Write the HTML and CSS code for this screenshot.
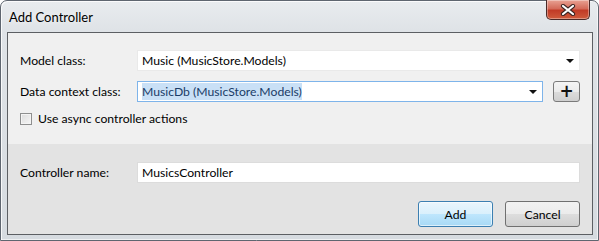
FILE: index.html
```html
<!DOCTYPE html>
<html lang="en">
<head>
  <meta charset="UTF-8">
  <title>Add Controller</title>
  <link rel="stylesheet" href="styles.css">
</head>
<body>
  <div class="window">
    <div class="titlebar">
      <span class="title">Add Controller</span>
      <button class="close-btn" title="Close">
        <svg width="16" height="12" viewBox="0 0 16 12">
          <path d="M3 2 L13 10 M13 2 L3 10" stroke="#3a2422" stroke-width="4.2" stroke-linecap="round"/>
          <path d="M3 2 L13 10 M13 2 L3 10" stroke="#fff" stroke-width="2.2" stroke-linecap="round"/>
        </svg>
      </button>
    </div>

    <div class="client">
      <div class="options">
        <div class="field">
          <label>Model class:</label>
          <div class="combo">
            <span class="combo-text">Music (MusicStore.Models)</span>
            <span class="arrow"></span>
          </div>
        </div>

        <div class="field">
          <label>Data context class:</label>
          <div class="combo-row">
            <div class="combo focused">
              <span class="combo-text"><span class="selected">MusicDb (MusicStore.Models)</span></span>
              <span class="arrow"></span>
            </div>
            <button class="plus-btn">+</button>
          </div>
        </div>

        <label class="check">
          <span class="box"></span>
          Use async controller actions
        </label>
      </div>

      <div class="footer">
        <div class="field">
          <label>Controller name:</label>
          <div class="textbox">MusicsController</div>
        </div>
        <div class="buttons">
          <button class="btn default">Add</button>
          <button class="btn">Cancel</button>
        </div>
      </div>
    </div>
  </div>
</body>
</html>
```

FILE: styles.css
```css
* {
  box-sizing: border-box;
}

body {
  margin: 0;
  width: 599px;
  height: 241px;
  background: #ffffff;
  font-family: Lato, "Noto Sans", sans-serif;
  font-size: 12.2px;
  color: #000;
  overflow: hidden;
}

.window {
  width: 599px;
  height: 241px;
  border: 1px solid #5f6670;
  border-radius: 7px 7px 0 0;
  padding: 0 5px 5px 6px;
  background: linear-gradient(to bottom, #e9ecef 0%, #dfe3e7 12%, #d6dbe0 100%);
  box-shadow: inset 1px 1px 0 rgba(255, 255, 255, 0.8), inset -1px -1px 0 rgba(255, 255, 255, 0.6);
}

.titlebar {
  height: 31px;
  display: flex;
  align-items: flex-start;
  justify-content: space-between;
}

.title {
  margin-top: 8px;
  margin-left: 2px;
  font-size: 13px;
  color: #000;
  text-shadow: 0 0 6px rgba(255, 255, 255, 0.9);
}

.close-btn {
  width: 44px;
  height: 20px;
  margin-top: -1px;
  margin-right: 3px;
  padding: 0;
  border: 1px solid #4a2a28;
  border-top: none;
  border-radius: 0 0 5px 5px;
  background: linear-gradient(to bottom, #e8a293 0%, #d46b5a 45%, #c13b26 55%, #cf5b3c 100%);
  box-shadow: inset 0 0 0 1px rgba(255, 255, 255, 0.35);
  display: flex;
  align-items: center;
  justify-content: center;
}

.client {
  height: 203px;
  border: 1px solid #5c5f63;
  background: #f0f0f0;
  display: flex;
  flex-direction: column;
}

.options {
  height: 111px;
  padding: 17px 12px 0 12px;
  display: flex;
  flex-direction: column;
  gap: 10px;
}

.field {
  display: grid;
  grid-template-columns: 117px 1fr;
  align-items: center;
}

.field label {
  line-height: 21px;
}

.combo,
.textbox {
  height: 21px;
  background: #fff;
  border: 1px solid #e9e9e9;
  display: flex;
  align-items: center;
  padding-left: 3px;
}

.combo {
  justify-content: space-between;
}

.combo.focused {
  border-color: #7eb4ea;
  flex: 1;
}

.combo-text {
  padding-left: 1px;
}

.selected {
  background: #c9e0f6;
  color: #1a3c67;
  padding: 1px 0;
}

.arrow {
  width: 0;
  height: 0;
  margin-right: 5px;
  border-left: 4px solid transparent;
  border-right: 4px solid transparent;
  border-top: 4px solid #111;
}

.combo-row {
  display: flex;
  gap: 10px;
}

.plus-btn {
  width: 27px;
  height: 21px;
  padding: 0;
  border: 1px solid #7a7a7a;
  border-radius: 3px;
  background: linear-gradient(to bottom, #f4f4f4 0%, #ebebeb 50%, #dcdcdc 51%, #cfcfcf 100%);
  font-family: "DejaVu Sans", sans-serif;
  font-size: 17px;
  font-weight: bold;
  line-height: 17px;
  color: #111;
}

.check {
  display: flex;
  align-items: center;
  gap: 6px;
  height: 13px;
}

.box {
  width: 12px;
  height: 12px;
  border: 1px solid #8e8f8f;
  background: linear-gradient(to bottom right, #dcdcdc, #f6f6f6);
  box-shadow: inset 0 0 0 1px #f4f4f4;
}

.footer {
  flex: 1;
  background: #e3e3e3;
  padding: 18px 12px 0 12px;
  display: flex;
  flex-direction: column;
  gap: 18px;
}

.textbox {
  padding-left: 4px;
  border-color: #dcdcdc;
}

.buttons {
  display: flex;
  justify-content: flex-end;
  gap: 12px;
}

.btn {
  width: 75px;
  height: 26px;
  padding: 0;
  border: 1px solid #707070;
  border-radius: 3px;
  background: linear-gradient(to bottom, #f2f2f2 0%, #ebebeb 50%, #dddddd 51%, #cfcfcf 100%);
  font-family: inherit;
  font-size: inherit;
  color: #000;
}

.btn.default {
  border-color: #3c7fb1;
  background: linear-gradient(to bottom, #eaf6fd 0%, #d9f0fc 50%, #bee6fd 51%, #a7d9f5 100%);
  box-shadow: inset 0 0 0 1px rgba(255, 255, 255, 0.6);
}
```
